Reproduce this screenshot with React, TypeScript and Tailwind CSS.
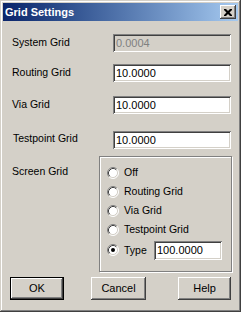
import React from 'react';

const font = { fontFamily: '"Liberation Sans", Arial, sans-serif' };

const sunken =
    'shadow-[inset_1px_1px_0_#808080,inset_-1px_-1px_0_#ffffff,inset_2px_2px_0_#404040,inset_-2px_-2px_0_#d4d0c8]';
const raised =
    'shadow-[inset_-1px_-1px_0_#404040,inset_1px_1px_0_#ffffff,inset_-2px_-2px_0_#808080,inset_2px_2px_0_#d4d0c8]';

function Field({ value, disabled, className = '' }: { value: string; disabled?: boolean; className?: string }) {
    return (
        <div
            className={`h-[18px] flex items-center pl-[3px] text-[11px] leading-none ${sunken} ${
                disabled ? 'bg-[#d4d0c8] text-[#808080]' : 'bg-white text-black'
            } ${className}`}
        >
            {value}
        </div>
    );
}

function Radio({ checked }: { checked?: boolean }) {
    return (
        <svg width="12" height="12" viewBox="0 0 12 12" className="shrink-0">
            <circle cx="6" cy="6" r="5" fill="#ffffff" />
            <path d="M2.11 9.89 A5.5 5.5 0 0 1 9.89 2.11" stroke="#808080" strokeWidth="1" fill="none" />
            <path d="M9.89 2.11 A5.5 5.5 0 0 1 2.11 9.89" stroke="#ffffff" strokeWidth="1" fill="none" />
            <path d="M2.82 9.18 A4.5 4.5 0 0 1 9.18 2.82" stroke="#404040" strokeWidth="1" fill="none" />
            <path d="M9.18 2.82 A4.5 4.5 0 0 1 2.82 9.18" stroke="#d4d0c8" strokeWidth="1" fill="none" />
            {checked && <circle cx="6" cy="6" r="2" fill="#000000" />}
        </svg>
    );
}

function Button({ label, width, isDefault }: { label: string; width: string; isDefault?: boolean }) {
    return (
        <div className={`${width} h-[23px] ${isDefault ? 'border border-black' : ''}`}>
            <div className={`w-full h-full bg-[#d4d0c8] flex items-center justify-center text-[11px] text-black ${raised}`}>
                {label}
            </div>
        </div>
    );
}

export default function App() {
    const rows = [
        { label: 'System Grid', value: '0.0004', disabled: true, mt: 'mt-0' },
        { label: 'Routing Grid', value: '10.0000', mt: 'mt-[12px]' },
        { label: 'Via Grid', value: '10.0000', mt: 'mt-[14px]' },
        { label: 'Testpoint Grid', value: '10.0000', mt: 'mt-[17px]', shift: true },
    ];

    return (
        <div
            style={font}
            className="w-[241px] h-[312px] bg-[#d4d0c8] p-[3px] flex flex-col shadow-[inset_-1px_-1px_0_#404040,inset_1px_1px_0_#d4d0c8,inset_-2px_-2px_0_#808080,inset_2px_2px_0_#ffffff]"
        >
            <div className="h-[18px] shrink-0 bg-gradient-to-r from-[#0a246a] to-[#a6caf0] flex items-center justify-between pl-[2px] pr-[2px]">
                <span className="text-white font-bold text-[11px] leading-none">Grid Settings</span>
                <div className={`w-[16px] h-[14px] bg-[#d4d0c8] flex items-center justify-center ${raised}`}>
                    <svg width="8" height="7" viewBox="0 0 8 7">
                        <path d="M0 0h2l2 2 2-2h2v1L5.5 3.5 8 6v1H6L4 5 2 7H0V6l2.5-2.5L0 1z" fill="#000" />
                    </svg>
                </div>
            </div>

            <div className="flex flex-col pl-[9px] pt-[13px] text-[10.5px] text-black">
                {rows.map((r) => (
                    <div key={r.label} className={`flex items-center h-[18px] ${r.mt}`}>
                        <span className={`w-[101px] leading-none ${r.shift ? 'pl-[1px] -mt-[4px]' : '-mt-[1px]'}`}>{r.label}</span>
                        <Field value={r.value} disabled={r.disabled} className="w-[118px]" />
                    </div>
                ))}

                <div className="flex mt-[7px]">
                    <span className="w-[87px] pt-[10px] leading-none">Screen Grid</span>
                    <div className="w-[133px] h-[116px] border border-[#808080] shadow-[1px_1px_0_#ffffff,inset_1px_1px_0_#ffffff] pl-[7px] pt-[6px] flex flex-col">
                        {['Off', 'Routing Grid', 'Via Grid', 'Testpoint Grid'].map((t) => (
                            <div key={t} className="h-[19px] flex items-center">
                                <Radio />
                                <span className="ml-[5px] leading-none">{t}</span>
                            </div>
                        ))}
                        <div className="h-[20px] flex items-center mt-[1px]">
                            <Radio checked />
                            <span className="ml-[5px] w-[30px] leading-none">Type</span>
                            <Field value="100.0000" className="w-[68px] h-[19px]" />
                        </div>
                    </div>
                </div>

                <div className="flex mt-[5px] pl-[-2px]">
                    <div className="-ml-[2px] flex">
                        <Button label="OK" width="w-[54px]" isDefault />
                        <div className="w-[27px]" />
                        <Button label="Cancel" width="w-[55px]" />
                        <div className="w-[32px]" />
                        <Button label="Help" width="w-[53px]" />
                    </div>
                </div>
            </div>
        </div>
    );
}
